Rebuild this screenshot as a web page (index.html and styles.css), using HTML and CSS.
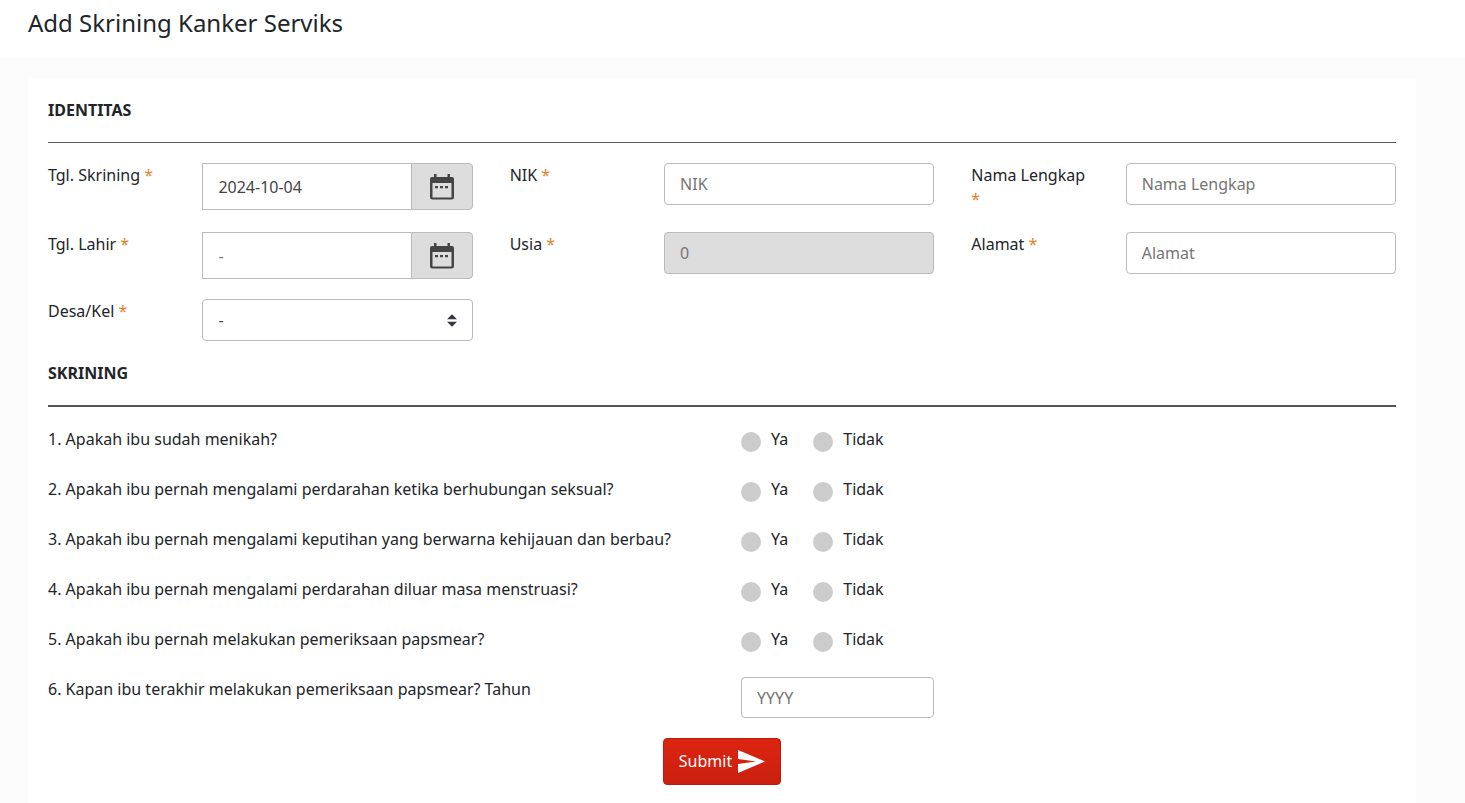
FILE: index.html
```html
<!DOCTYPE html>
<html lang="id">
<head>
<meta charset="utf-8">
<title>Add Skrining Kanker Serviks</title>
<link rel="stylesheet" href="styles.css">
</head>
<body>
<svg class="sprite" aria-hidden="true">
  <symbol id="calendar" viewBox="0 0 24 26">
    <path fill-rule="evenodd" d="M4 0h2.500v3h11V0H20v3h2q2 0 2 2v18q0 2.500-2.500 2.500h-19Q0 25.500 0 23V5q0-2 2-2h2zM2.500 9v14.500h19V9zM5 12h3v2.300H5zm5 0h3v2.300h-3zm5 0h3v2.300h-3z"/>
  </symbol>
  <symbol id="send" viewBox="0 0 27 23">
    <path d="M0 0l27 11.500L0 23v-9l18-2.500L0 9z"/>
  </symbol>
</svg>

<header class="page-header">
  <h1 class="page-title">Add Skrining Kanker Serviks</h1>
</header>

<main class="page-body">
  <form class="card">
    <h2 class="section-title">IDENTITAS</h2>
    <hr class="rule">

    <div class="fields">
      <div class="field">
        <label class="label" for="tgl-skrining">Tgl. Skrining <span class="required">*</span></label>
        <div class="date-group">
          <input class="date-input" id="tgl-skrining" type="text" value="2024-10-04">
          <button class="date-button" type="button" aria-label="Pilih tanggal skrining"><svg class="calendar-icon"><use href="#calendar"/></svg></button>
        </div>
      </div>
      <div class="field">
        <label class="label" for="nik">NIK <span class="required">*</span></label>
        <input class="control" id="nik" type="text" placeholder="NIK">
      </div>
      <div class="field">
        <label class="label" for="nama">Nama Lengkap <span class="required">*</span></label>
        <input class="control" id="nama" type="text" placeholder="Nama Lengkap">
      </div>
      <div class="field">
        <label class="label" for="tgl-lahir">Tgl. Lahir <span class="required">*</span></label>
        <div class="date-group">
          <input class="date-input" id="tgl-lahir" type="text" placeholder="-">
          <button class="date-button" type="button" aria-label="Pilih tanggal lahir"><svg class="calendar-icon"><use href="#calendar"/></svg></button>
        </div>
      </div>
      <div class="field">
        <label class="label" for="usia">Usia <span class="required">*</span></label>
        <input class="control readonly" id="usia" type="text" placeholder="0" readonly>
      </div>
      <div class="field">
        <label class="label" for="alamat">Alamat <span class="required">*</span></label>
        <input class="control" id="alamat" type="text" placeholder="Alamat">
      </div>
      <div class="field">
        <label class="label" for="desa">Desa/Kel <span class="required">*</span></label>
        <select class="control select" id="desa"><option>-</option></select>
      </div>
    </div>

    <h2 class="section-title">SKRINING</h2>
    <hr class="rule thick">

    <div class="questions">
      <div class="question" role="radiogroup" aria-labelledby="t1">
        <span id="t1">1. Apakah ibu sudah menikah?</span>
        <div class="options">
          <label class="option"><input class="radio" type="radio" name="q1">Ya</label>
          <label class="option"><input class="radio" type="radio" name="q1">Tidak</label>
        </div>
      </div>
      <div class="question" role="radiogroup" aria-labelledby="t2">
        <span id="t2">2. Apakah ibu pernah mengalami perdarahan ketika berhubungan seksual?</span>
        <div class="options">
          <label class="option"><input class="radio" type="radio" name="q2">Ya</label>
          <label class="option"><input class="radio" type="radio" name="q2">Tidak</label>
        </div>
      </div>
      <div class="question" role="radiogroup" aria-labelledby="t3">
        <span id="t3">3. Apakah ibu pernah mengalami keputihan yang berwarna kehijauan dan berbau?</span>
        <div class="options">
          <label class="option"><input class="radio" type="radio" name="q3">Ya</label>
          <label class="option"><input class="radio" type="radio" name="q3">Tidak</label>
        </div>
      </div>
      <div class="question" role="radiogroup" aria-labelledby="t4">
        <span id="t4">4. Apakah ibu pernah mengalami perdarahan diluar masa menstruasi?</span>
        <div class="options">
          <label class="option"><input class="radio" type="radio" name="q4">Ya</label>
          <label class="option"><input class="radio" type="radio" name="q4">Tidak</label>
        </div>
      </div>
      <div class="question" role="radiogroup" aria-labelledby="t5">
        <span id="t5">5. Apakah ibu pernah melakukan pemeriksaan papsmear?</span>
        <div class="options">
          <label class="option"><input class="radio" type="radio" name="q5">Ya</label>
          <label class="option"><input class="radio" type="radio" name="q5">Tidak</label>
        </div>
      </div>
      <div class="question">
        <label for="tahun">6. Kapan ibu terakhir melakukan pemeriksaan papsmear? Tahun</label>
        <input class="control year" id="tahun" type="text" placeholder="YYYY">
      </div>
    </div>

    <div class="actions">
      <button class="submit" type="submit"><span class="submit-text">Submit</span> <svg class="send-icon" aria-hidden="true"><use href="#send"/></svg></button>
    </div>
  </form>
</main>
</body>
</html>
```

FILE: styles.css
```css
* {
  box-sizing: border-box;
}

body {
  margin: 0;
  min-height: 100vh;
  display: flex;
  flex-direction: column;
  background: #fcfcfc;
  color: #212529;
  font: 16px/24px "Noto Sans", "Open Sans", sans-serif;
}

input,
select,
button {
  margin: 0;
  font: inherit;
}

.sprite {
  display: none;
}

.page-header {
  padding: 5px 28px 17px;
  background: #fff;
}

.page-title {
  margin: 0;
  font-size: 24px;
  font-weight: 400;
  line-height: 36px;
}

.page-body {
  flex: 1;
  display: flex;
  flex-direction: column;
  padding: 20px 49px 0 28px;
}

.card {
  flex: 1;
  padding: 20px 20px 18px;
  border-radius: 4px 4px 0 0;
  background: #fff;
}

.section-title {
  margin: 0;
  font-size: 16px;
  font-weight: 700;
  line-height: 24px;
}

.rule {
  height: 1px;
  margin: 20px 0;
  border: 0;
  background: #555;
}

.rule.thick {
  height: 2px;
}

.fields {
  display: grid;
  grid-template-columns: repeat(3, minmax(0, 1fr));
  gap: 20px 37px;
  margin-bottom: 20px;
}

.field {
  display: grid;
  grid-template-columns: minmax(0, 4fr) minmax(0, 7fr);
  align-items: start;
}

.label {
  padding: 0 32px 1px 0;
}

.required {
  color: #e08330;
}

.control {
  width: 100%;
  height: 42px;
  padding: 0 15px;
  border: 1px solid #bbb;
  border-radius: 4px;
  background: #fff;
  color: #444;
}

.control::placeholder,
.date-input::placeholder {
  color: #757575;
  opacity: 1;
}

.readonly {
  background: #ddd;
}

.select {
  appearance: none;
  background: #fff url("data:image/svg+xml,%3Csvg xmlns='http://www.w3.org/2000/svg' viewBox='0 0 4 5'%3E%3Cpath fill='%23343a40' d='M2 0L0 2h4zm0 5L0 3h4z'/%3E%3C/svg%3E") no-repeat right 15px center / 10px 13px;
}

.date-group {
  display: flex;
}

.date-input {
  flex: 1;
  min-width: 0;
  height: 47px;
  padding: 0 15px;
  border: 1px solid #bbb;
  border-right: 0;
  border-radius: 0;
  background: #fff;
  color: #444;
}

.date-button {
  display: flex;
  align-items: center;
  justify-content: center;
  width: 62px;
  padding: 0;
  border: 1px solid #bbb;
  border-radius: 0 4px 4px 0;
  background: #ddd;
}

.calendar-icon {
  width: 24px;
  height: 26px;
  fill: #444;
}

.questions {
  display: grid;
  gap: 25px;
}

.question {
  display: grid;
  grid-template-columns: minmax(0, 693fr) minmax(0, 655fr);
  align-items: start;
}

.options {
  display: flex;
  gap: 25px;
}

.option {
  display: flex;
  gap: 10px;
}

.radio {
  appearance: none;
  width: 20px;
  height: 20px;
  margin-top: 5px;
  border-radius: 50%;
  background: #ccc;
}

.radio:checked {
  border: 6px solid #d9230f;
  background: #fff;
}

.year {
  width: 193px;
  height: 41px;
}

.actions {
  display: flex;
  justify-content: center;
  margin-top: 20px;
}

.submit {
  display: flex;
  align-items: center;
  gap: 6px;
  height: 47px;
  padding: 0 15px;
  border: 1px solid #b81e0d;
  border-radius: 4px;
  background: linear-gradient(#dd2410, #c9200e);
  color: #fff;
}

.submit-text {
  padding-bottom: 2px;
}

.send-icon {
  width: 27px;
  height: 23px;
  fill: #fff;
}
```
